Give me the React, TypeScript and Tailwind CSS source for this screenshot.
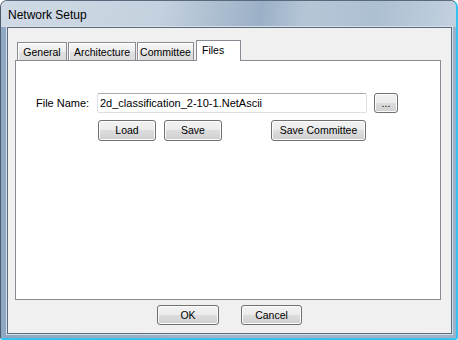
function Btn({
  className,
  children,
}: {
  className: string;
  children: React.ReactNode;
}) {
  return (
    <div
      className={`${className} shrink-0 rounded-[3px] border border-[#707070] bg-[linear-gradient(to_bottom,#f2f2f2_0%,#ebebeb_50%,#dddddd_50%,#cfcfcf_100%)] shadow-[inset_0_0_0_1px_#fbfbfb] flex items-center justify-center text-[10.5px] leading-none text-black`}
    >
      {children}
    </div>
  );
}

export default function App() {
  return (
    <div className="w-[458px] h-[340px] bg-white font-['Liberation_Sans',Arial,sans-serif]">
      <div className="w-[458px] h-[340px] flex flex-col overflow-hidden rounded-t-[7px] rounded-b-[3px] border-l border-t border-l-[#4c5b6e] border-t-[#5a6a7e] border-r-[2px] border-b-[2px] border-r-[#35c2ee] border-b-[#35c2ee] bg-[#93aac3] shadow-[inset_1px_1px_0_#e2e9f1]">
        {/* title bar */}
        <div className="h-[26px] shrink-0 flex items-center pl-[7px] pt-[1px] text-[12px] text-black bg-[linear-gradient(100deg,#d0dae6_0%,#c4d1de_35%,#a8bace_50%,#9bb0c7_57%,#b6c6d7_67%,#adbfd2_82%,#c3d1df_100%)]">
          Network Setup
        </div>
        {/* body frame */}
        <div className="flex-1 flex pl-[6px] pr-[4px] pb-[4px] bg-[linear-gradient(to_right,#8fa7c2,#a2b6cb_50%,#9db2c8)]">
          <div className="flex-1 flex flex-col border border-[#5c6b7e] bg-[#f0f0f0] shadow-[0_0_0_1px_#d5dfea]">
            <div className="pt-[12px] pl-[7px] pr-[10px]">
              {/* tabs */}
              <div className="h-[20px] flex items-end">
                <div className="ml-[2px] w-[50px] h-[18px] flex items-center justify-center pt-[1px] border-t border-l border-r border-[#898c95] bg-[linear-gradient(to_bottom,#f7f7f7_0%,#ececec_50%,#e0e0e0_50%,#dcdcdc_100%)] shadow-[inset_1px_1px_0_#ffffff] text-[10.5px] leading-none text-black">
                  General
                </div>
                <div className="ml-[1px] w-[68px] h-[18px] flex items-center justify-center pt-[1px] border-t border-l border-r border-[#898c95] bg-[linear-gradient(to_bottom,#f7f7f7_0%,#ececec_50%,#e0e0e0_50%,#dcdcdc_100%)] shadow-[inset_1px_1px_0_#ffffff] text-[10.5px] leading-none text-black">
                  Architecture
                </div>
                <div className="ml-[1px] w-[57px] h-[18px] flex items-center justify-center pt-[1px] border-t border-l border-r border-[#898c95] bg-[linear-gradient(to_bottom,#f7f7f7_0%,#ececec_50%,#e0e0e0_50%,#dcdcdc_100%)] shadow-[inset_1px_1px_0_#ffffff] text-[10.5px] leading-none text-black">
                  Committee
                </div>
                <div className="relative z-10 ml-[2px] mb-[-1px] w-[45px] h-[21px] flex items-center pl-[5px] pb-[2px] border-t border-l border-r border-[#898c95] bg-white text-[10.5px] leading-none text-black">
                  Files
                </div>
              </div>
              {/* panel */}
              <div className="h-[240px] border border-[#898c95] bg-white pt-[32px]">
                <div className="h-[20px] flex items-center pl-[20px]">
                  <div className="w-[61px] shrink-0 text-[11px] leading-none text-black">
                    File Name:
                  </div>
                  <div className="w-[270px] h-[20px] shrink-0 flex items-center pl-[2px] rounded-[2px] border border-[#dbdfe6] border-t-[#abadb3] text-[11px] leading-none text-black whitespace-nowrap overflow-hidden">
                    2d_classification_2-10-1.NetAscii
                  </div>
                  <Btn className="ml-[7px] w-[24px] h-[20px]">...</Btn>
                </div>
                <div className="mt-[7px] h-[21px] flex">
                  <Btn className="ml-[82px] w-[58px] h-[21px]">Load</Btn>
                  <Btn className="ml-[8px] w-[58px] h-[21px]">Save</Btn>
                  <Btn className="ml-[49px] w-[95px] h-[21px]">Save Committee</Btn>
                </div>
              </div>
            </div>
            {/* bottom buttons */}
            <div className="mt-[5px] flex justify-center gap-[22px]">
              <Btn className="w-[62px] h-[20px]">OK</Btn>
              <Btn className="w-[61px] h-[20px]">Cancel</Btn>
            </div>
          </div>
        </div>
      </div>
    </div>
  );
}
